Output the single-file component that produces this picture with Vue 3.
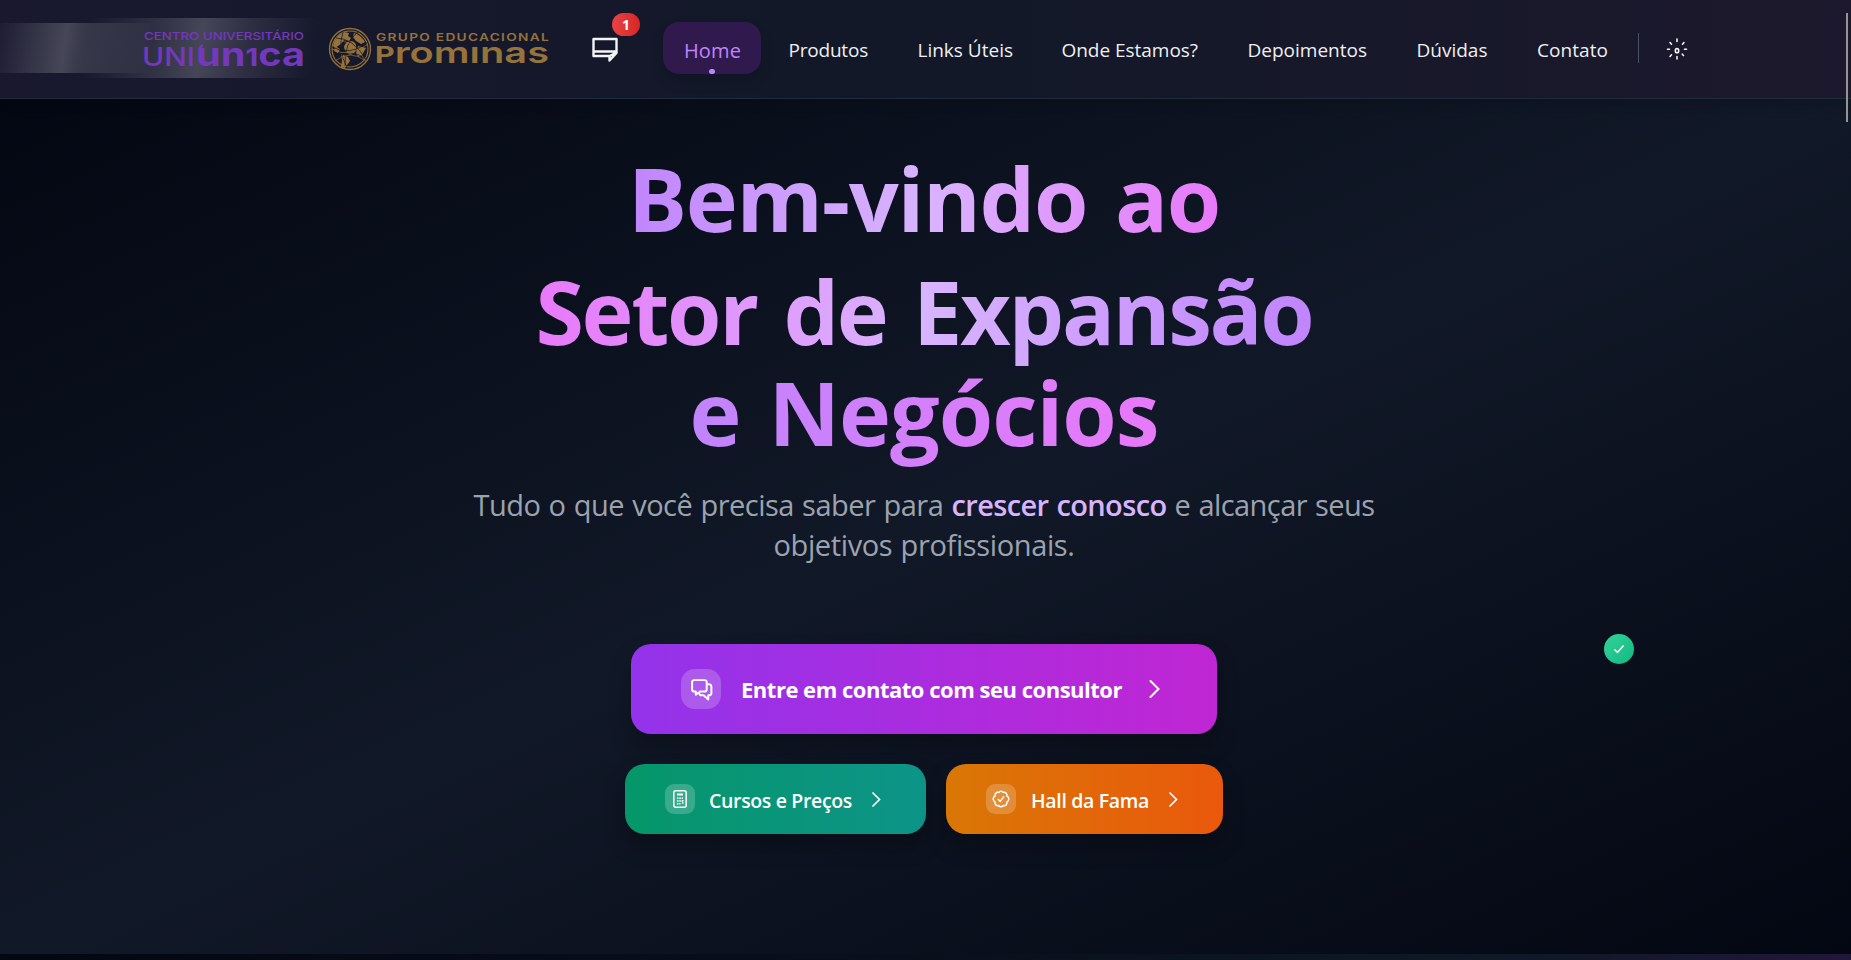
<script setup>
const nav = [
  { label: 'Produtos', left: 788.5, width: 79.5 },
  { label: 'Links Úteis', left: 917.5, width: 95.5 },
  { label: 'Onde Estamos?', left: 1061.5, width: 136.5 },
  { label: 'Depoimentos', left: 1247.5, width: 119.5 },
  { label: 'Dúvidas', left: 1416.5, width: 71 },
  { label: 'Contato', left: 1537, width: 71 },
].map((item, i, all) => ({
  ...item,
  gap: item.left - (i ? all[i - 1].left + all[i - 1].width : 761),
}))

// Tracks a label in or out so that it fills the given width.
const vFit = {
  mounted(el, { value }) {
    const natural = el.getBoundingClientRect().width
    el.style.letterSpacing = `${(value - natural) / el.textContent.length}px`
  },
}
</script>

<template>
  <div class="page">
    <header class="header">
      <div class="sheen sheen-a"></div>
      <div class="sheen sheen-b"></div>
      <svg class="uniunica" viewBox="0 0 164 44">
        <g fill="#7438bd" font-family="Inter, sans-serif">
          <text x="2" y="11" font-size="11" font-weight="500" textLength="160" lengthAdjust="spacingAndGlyphs">CENTRO UNIVERSITÁRIO</text>
          <text x="0" y="36.500" font-size="25" font-weight="500" textLength="53" lengthAdjust="spacingAndGlyphs">UNI</text>
          <text x="54" y="36.500" font-size="32" font-weight="700" textLength="109" lengthAdjust="spacingAndGlyphs">un<tspan font-size="24.500">1</tspan>ca</text>
        </g>
        <path d="M57 20l3.500-4" stroke="#7438bd" stroke-width="2" />
      </svg>
      <svg class="prominas" viewBox="0 0 222 46">
        <g fill="none" stroke="#96733b">
          <circle cx="22" cy="22" r="20.500" stroke-width="1.300" />
          <circle cx="22" cy="22" r="18" stroke-width="1.100" />
        </g>
        <path fill="#96733b" d="M10 9l6-4 5 1-1 3 3 2-2 3-5-1-3 4-6 4-2-2q1-6 5-10zM26 6q7 2 11 9l-4 2-5-3-3-4zM22 14q5 0 6 4t-2 8q-3 3-6 1t-4-7q1-5 6-6zM30 19l8 2-4 7-4 2-2-4zM13 27l7 3 2 4-5 7-4-1 1-6zM7 19l5 3-2 4-4-2z" />
        <path fill="none" stroke="#171a2c" stroke-width=".8" d="M4 20q18 10 36-5M7 32q15-12 31 0M15 5q-6 18 4 35M30 5q-14 10-13 34M8 11q17 0 29 20" />
        <path fill="none" stroke="#96733b" stroke-width=".7" d="M4 22q18 10 36-5M7 34q15-12 31 0M8 13q17 0 29 20" />
        <g fill="#96733b" font-family="Inter, sans-serif">
          <text x="48" y="13.500" font-size="10.500" font-weight="600" textLength="174" lengthAdjust="spacingAndGlyphs" letter-spacing="1">GRUPO EDUCACIONAL</text>
          <text x="47" y="35.500" font-size="29.500" font-weight="600" textLength="174" lengthAdjust="spacingAndGlyphs"><tspan font-size="22.500" font-weight="700">P</tspan>romınas</text>
        </g>
      </svg>
      <div class="chat">
        <svg viewBox="0 0 26 26" fill="none" stroke="#f3f4f6" stroke-width="2.400" stroke-linejoin="round">
          <path d="M1.500 2h23v14l-7 7.500v-4.500h-16zM1.500 14.500h23M17.500 19l6-3" />
        </svg>
        <span class="count">1</span>
      </div>
      <nav class="nav">
        <a class="home"><span v-fit="57">Home</span><i></i></a>
        <a v-for="item in nav" :key="item.label" class="link" :style="{ marginLeft: item.gap + 'px', width: item.width + 'px' }"><span v-fit="item.width">{{ item.label }}</span></a>
      </nav>
      <div class="divider"></div>
      <svg class="sun" viewBox="0 0 22 22" fill="none" stroke="#f3f4f6" stroke-width="1.600" stroke-linecap="round">
        <ellipse cx="11" cy="12.700" rx="1.700" ry="2.100" />
        <path d="M11 1v2.500M11 18.500V21M1.500 11.300h2M18.500 11.300h2M4 4.500l1.500 1.700M18 4.500l-1.500 1.700M4 18.500l1.500-1.700M17.500 17.500l-1.200-1.300" />
      </svg>
    </header>

    <main class="hero">
      <h1>
        <span class="line one"><span v-fit="592">Bem-vindo ao</span></span>
        <span class="line two"><span v-fit="777">Setor de Expansão</span></span>
        <span class="line three"><span v-fit="469">e Negócios</span></span>
      </h1>
      <div class="lead">
        <div><span v-fit="478">Tudo o que você precisa saber para&nbsp;</span><strong v-fit="215">crescer conosco</strong><span v-fit="208">&nbsp;e alcançar seus</span></div>
        <div><span v-fit="301">objetivos profissionais.</span></div>
      </div>
      <button class="cta primary">
        <span class="tile big">
          <svg viewBox="0 0 24 24" fill="none" stroke="#fff" stroke-width="1.900" stroke-linejoin="round"><path d="M5 3h10q2 0 2 2v7q0 2-2 2h-4.500l-4 3v-3H5q-2 0-2-2V5q0-2 2-2zM17 7h2q2 0 2.500 2v6.500q0 2-2.500 2h-.5v4l-4.500-4h-2q-2 0-2-2" /></svg>
        </span>
        <span class="text"><span v-fit="381">Entre em contato com seu consultor</span></span>
        <svg class="arrow" viewBox="0 0 11 18"><path d="M1.500 1l8 8-8 8" /></svg>
      </button>
      <div class="row">
        <button class="cta green">
          <span class="tile">
            <svg viewBox="0 0 20 20" fill="none" stroke="#fff" stroke-width="1.500"><rect x="3.800" y="1.800" width="12.400" height="16.400" rx="2" /><path d="M7 5.500h6" stroke-width="2" /><path d="M7 9.200h6M7 12h6M7 14.800h3.500M12.800 11v4.500" stroke-dasharray="1.500 .8" /></svg>
          </span>
          <span class="text"><span v-fit="143">Cursos e Preços</span></span>
          <svg class="arrow" viewBox="0 0 9 15"><path d="M1 1l6.500 6.500L1 14" /></svg>
        </button>
        <button class="cta orange">
          <span class="tile">
            <svg viewBox="0 0 20 20" fill="none" stroke="#fff" stroke-width="1.500" stroke-linejoin="round" stroke-linecap="round"><path d="M10 2.200q1.400 0 2.300 1.300 1.700-.5 2.800.6t.7 2.800Q17.800 8 17.800 10t-2 3.100q.4 1.700-.7 2.800t-2.800.6q-.9 1.300-2.300 1.300t-2.300-1.300q-1.700.5-2.800-.6t-.7-2.800q-2-1.100-2-3.100t2-3.100q-.4-1.700.7-2.800t2.800-.6Q8.600 2.200 10 2.200z" /><path d="M7.300 10.500l1.900 1.900 3.500-4.600" /></svg>
          </span>
          <span class="text"><span v-fit="118">Hall da Fama</span></span>
          <svg class="arrow" viewBox="0 0 9 15"><path d="M1 1l6.500 6.500L1 14" /></svg>
        </button>
      </div>
    </main>
    <div class="next"></div>
    <div class="status"><svg viewBox="0 0 12 12"><path d="M1.500 6.500l3 3 6-7" /></svg></div>
    <div class="thumb"></div>
  </div>
</template>

<style>
html,
body {
  overflow: hidden;
  background: #030712;
}
</style>

<style scoped>
.page {
  position: relative;
  width: 1851px;
  height: 960px;
  overflow: hidden;
  font-family: 'Open Sans', 'Noto Sans', sans-serif;
}
.header {
  position: relative;
  z-index: 1;
  box-sizing: border-box;
  display: flex;
  align-items: flex-start;
  height: 99px;
  border-bottom: 1px solid #1f2c3a;
  background: linear-gradient(90deg, #19182f, #121828 50%, #1d182d);
  box-shadow: 0 4px 10px rgba(0, 0, 0, 0.12);
}
.sheen {
  position: absolute;
}
.sheen-a {
  left: 0;
  top: 23px;
  width: 150px;
  height: 50px;
  background: linear-gradient(98deg, rgba(255, 255, 255, 0.02), rgba(255, 255, 255, 0.2) 43%, rgba(255, 255, 255, 0.15) 52%, transparent);
}
.sheen-b {
  left: 80px;
  top: 18px;
  width: 240px;
  height: 60px;
  background: linear-gradient(98deg, transparent 4%, rgba(255, 255, 255, 0.12) 35%, rgba(255, 255, 255, 0.2) 50%, rgba(255, 255, 255, 0.1) 68%, transparent 96%);
}
.uniunica {
  position: relative;
  flex: none;
  width: 164px;
  height: 44px;
  margin: 29px 0 0 142px;
}
.prominas {
  flex: none;
  width: 222px;
  height: 46px;
  margin: 26.500px 0 0 22px;
}
.chat {
  position: relative;
  flex: none;
  width: 26px;
  height: 26px;
  margin: 37px 0 0 42px;
}
.chat svg {
  display: block;
  width: 26px;
  height: 26px;
}
.count {
  position: absolute;
  left: 20px;
  top: -24px;
  width: 28px;
  height: 23px;
  border-radius: 12px;
  background: linear-gradient(90deg, #ea4343, #d62626);
  color: #fff;
  font-size: 14px;
  font-weight: 700;
  line-height: 23px;
  text-align: center;
}
.nav {
  display: flex;
  margin: 22px 0 0 45px;
  color: #eef0f3;
  font-size: 19px;
  white-space: nowrap;
}
.home {
  position: relative;
  box-sizing: border-box;
  width: 98px;
  height: 52px;
  padding-left: 21px;
  border-radius: 16px;
  background: #2f194d;
  box-shadow: 0 8px 14px rgba(0, 0, 0, 0.13);
  color: #c084fc;
  font-size: 20px;
  line-height: 57px;
}
.home i {
  position: absolute;
  left: 46px;
  bottom: 0;
  width: 6px;
  height: 5px;
  border-radius: 3px;
  background: #c084fc;
}
.link {
  flex: none;
  line-height: 56px;
}
.divider {
  width: 1px;
  height: 30px;
  margin: 33px 0 0 30px;
  background: #465263;
}
.sun {
  flex: none;
  width: 22px;
  height: 22px;
  margin: 37.500px 0 0 27px;
}
.hero {
  display: flex;
  flex-direction: column;
  align-items: center;
  box-sizing: border-box;
  height: 855px;
  padding-right: 3px;
  background: linear-gradient(to bottom right, #030712, #111827 50%, #030712);
}
h1 {
  display: flex;
  flex-direction: column;
  align-items: center;
  margin: 49px 0 0;
  font-size: 88px;
  font-weight: 700;
  line-height: 101px;
  white-space: nowrap;
  word-spacing: 0.07em;
}
.line {
  display: block;
  color: transparent;
  -webkit-background-clip: text;
  background-clip: text;
}
.one {
  padding-bottom: 12px;
  background-image: linear-gradient(90deg, #c084fc, #d8b4fe 50%, #e879f9);
}
.two {
  padding-bottom: 8px;
  margin-bottom: -8px;
  background-image: linear-gradient(90deg, #e879f9, #d8b4fe 50%, #c084fc);
}
.three {
  padding-bottom: 10px;
  margin-bottom: -10px;
  background-image: linear-gradient(90deg, #c084fc, #e879f9);
}
.lead {
  margin-top: 22px;
  color: #9ca3af;
  font-size: 29px;
  line-height: 40px;
  text-align: center;
  white-space: nowrap;
  word-spacing: 0.04em;
}
.lead strong {
  color: #d8b4fe;
  font-weight: 650;
}
.cta {
  display: flex;
  align-items: center;
  box-sizing: border-box;
  height: 70px;
  padding: 0 0 0 40px;
  border: 0;
  border-radius: 20px;
  box-shadow: 0 12px 22px rgba(0, 0, 0, 0.25);
  color: #fff;
  font-family: inherit;
  font-size: 19.500px;
  font-weight: 600;
  white-space: nowrap;
}
.primary {
  flex: none;
  width: 586px;
  height: 90px;
  margin-top: 79px;
  padding-left: 50px;
  background: linear-gradient(90deg, #9333ea, #c026d3);
  font-size: 22px;
  font-weight: 700;
}
.row {
  display: flex;
  gap: 20px;
  margin-top: 30px;
}
.green {
  width: 301px;
  background: linear-gradient(90deg, #059669, #0d9488);
}
.orange {
  width: 277px;
  background: linear-gradient(90deg, #d97706, #ea580c);
}
.tile {
  display: grid;
  place-items: center;
  flex: none;
  width: 30px;
  height: 30px;
  border-radius: 9px;
  background: rgba(255, 255, 255, 0.2);
}
.big {
  width: 40px;
  height: 40px;
  border-radius: 14px;
}
.tile svg {
  width: 20px;
  height: 20px;
}
.big svg {
  width: 25px;
  height: 25px;
}
.text {
  flex: none;
  margin-left: 14px;
  padding-top: 2px;
}
.orange .text {
  margin-left: 15px;
}
.primary .text {
  margin-left: 20px;
  padding-top: 0;
}
.arrow {
  flex: none;
  width: 9px;
  height: 15px;
  margin-left: 20px;
  fill: none;
  stroke: #fff;
  stroke-width: 1.700;
  stroke-linecap: round;
}
.primary .arrow {
  width: 11px;
  height: 18px;
  margin-left: 27px;
  stroke-width: 2;
}
.next {
  height: 6px;
  background: linear-gradient(90deg, #030712, #09101c 50%, #111827 85%, #22173a);
}
.status {
  position: absolute;
  left: 1604px;
  top: 634px;
  display: grid;
  place-items: center;
  width: 30px;
  height: 30px;
  border-radius: 50%;
  background: linear-gradient(135deg, #34d399, #10b981);
}
.status svg {
  width: 12px;
  height: 12px;
  fill: none;
  stroke: #fff;
  stroke-width: 1.500;
}
.thumb {
  position: absolute;
  z-index: 2;
  left: 1846px;
  top: 13px;
  width: 2px;
  height: 109px;
  background: #949494;
}
</style>
